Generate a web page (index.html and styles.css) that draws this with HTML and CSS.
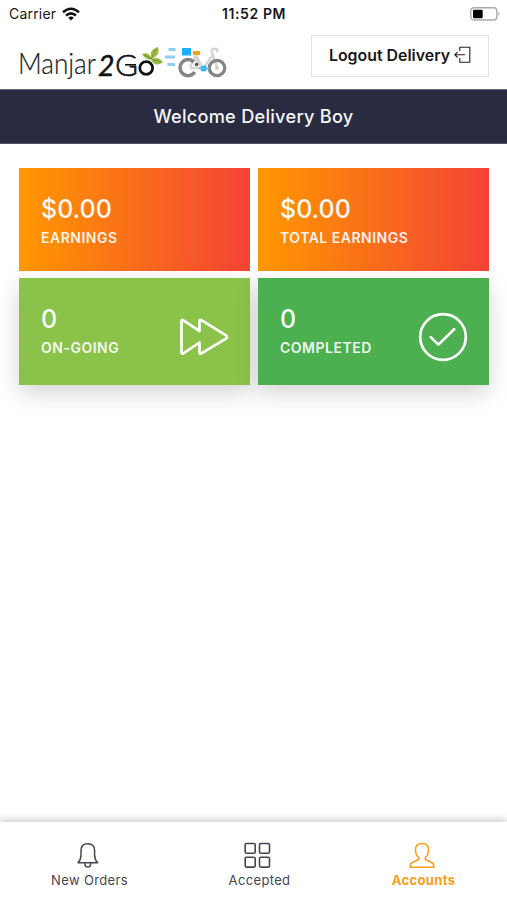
FILE: index.html
```html
<!DOCTYPE html>
<html lang="en">
<head>
<meta charset="utf-8">
<title>Manjar2Go Delivery</title>
<link rel="stylesheet" href="styles.css">
</head>
<body>
<div class="status">
  <div class="carrier"><span>Carrier</span>
    <svg width="18" height="14" viewBox="0 0 18 14" fill="none" stroke="#111" stroke-width="2.5"><path d="M1 5.2Q9-1.8 17 5.2M4 8.5Q9 4.2 14 8.5"/><path d="M6.2 10.7Q9 8.3 11.8 10.7L9 13.6Z" fill="#111" stroke="none"/></svg>
  </div>
  <div class="time">11:52 PM</div>
  <svg class="battery" width="31" height="14" viewBox="0 0 31 14"><rect x=".8" y=".8" width="26" height="12.2" rx="3.2" fill="none" stroke="#aaa" stroke-width="1.4"/><rect x="3" y="2.7" width="9.7" height="8.6" rx="1.2"/><path d="M28.4 4.8q2.2 2.2 0 4.4Z" fill="#aaa"/></svg>
</div>
<header class="header">
  <svg class="logo" width="210" height="36" viewBox="0 0 210 36">
    <text class="logo-text logo-thin" x="-1" y="30" textLength="78" lengthAdjust="spacingAndGlyphs">Manjar</text>
    <text class="logo-text logo-two" x="79" y="31.5" textLength="16.5" lengthAdjust="spacingAndGlyphs">2</text>
    <text class="logo-text logo-go" x="96" y="31.5" textLength="23" lengthAdjust="spacingAndGlyphs">G</text>
    <path d="M106 20.8H117" stroke="#111" stroke-width="1.6"/>
    <circle cx="127.2" cy="24" r="6.4" fill="none" stroke="#111" stroke-width="2.8"/>
    <g fill="#9abb43"><path d="M133 15Q129 6 139 3Q142 10 133 15ZM132 16Q138 11 144 18Q137 24 132 16ZM133 15Q127 17 123 10Q130 7 133 15Z"/><path d="M129 17Q134 14 137 5M132 15L142 18M125 11L133 15" fill="none" stroke="#668a2a" stroke-width=".7"/></g>
    <path d="M149.5 5.5h7M146 13h10M148.5 20.5h7.5" stroke="#8dcff8" stroke-width="3"/>
    <g fill="none" stroke="#d5d5d5" stroke-width="2.4"><path d="M171 23L177 11M177 11L184 25L193 12M171 24h12M192 6L198 23M192 5h6q1 2-1 3M176 12l4 10"/></g>
    <path d="M174.8 18A8 8 0 1 0 175.8 28" fill="none" stroke="#858585" stroke-width="3.5"/><circle cx="198" cy="24" r="7.7" fill="none" stroke="#858585" stroke-width="3.3"/>
    <circle cx="198" cy="24" r="2" fill="#ccc"/><circle cx="177.5" cy="20.5" r="1.8" fill="#555"/>
    <path d="M163 4h9v7.5H163Z" fill="#1caefa"/><path d="M174 7h7.2v4H174Z" fill="#f9a21b"/><circle cx="184.7" cy="24.5" r="3" fill="#20b4f4"/><path d="M180 24l10 1" stroke="#62bde9" stroke-width="1.5"/>
  </svg>
  <div class="logout"><span>Logout Delivery</span>
    <svg width="17" height="18" viewBox="0 0 17 18" fill="none" stroke="#222" stroke-width="1.1"><path d="M5.8 5V1.2H15.8V16.2H5.8V12M11 8.7H.8M3.6 5.9L.8 8.7L3.6 11.5"/></svg>
  </div>
</header>
<div class="banner"><span>Welcome Delivery Boy</span></div>
<main class="cards">
  <section class="card earnings"><div><div class="value">$0.00</div><div class="label">EARNINGS</div></div></section>
  <section class="card earnings"><div><div class="value">$0.00</div><div class="label">TOTAL EARNINGS</div></div></section>
  <section class="card count ongoing"><div><div class="value">0</div><div class="label">ON-GOING</div></div>
    <svg width="50" height="50" viewBox="0 0 50 50" fill="none" stroke="#fff" stroke-width="2.7" stroke-linejoin="round"><path d="M2.5 9.2Q2.5 7.2 4.4 8.4L20.5 19V9.2Q20.5 7.2 22.4 8.2L47 23.3Q49 25 47 26.6L22.4 41.4Q20.5 42.4 20.5 40.4V30.5L4.4 41.3Q2.5 42.4 2.5 40.4Z"/></svg></section>
  <section class="card count completed"><div><div class="value">0</div><div class="label">COMPLETED</div></div>
    <svg width="50" height="50" viewBox="0 0 50 50" fill="none" stroke="#fff" stroke-width="2.7" stroke-linecap="round" stroke-linejoin="round"><circle cx="25" cy="25" r="22.8"/><path d="M12.7 25.1L20.4 32.6L36.2 17.3"/></svg></section>
</main>
<nav class="nav">
  <div class="tab orders"><svg width="24" height="27" viewBox="0 0 24 27" fill="none" stroke="currentColor" stroke-width="1.5" stroke-linejoin="round"><path d="M2 20.7Q5 17.7 5 13V8.5Q5 1.7 11.8 1.7T18.6 8.5V13Q18.6 17.7 21.6 20.7ZM8.8 21.2Q9 25 11.8 25T14.8 21.2"/></svg><span>New Orders</span></div>
  <div class="tab accepted"><svg width="28" height="27" viewBox="0 0 28 27" fill="none" stroke="currentColor" stroke-width="1.6"><rect x="1.2" y="1.5" width="10" height="9.8" rx="1.3"/><rect x="15.5" y="1.5" width="10" height="9.8" rx="1.3"/><rect x="1.2" y="15.3" width="10" height="9.8" rx="1.3"/><rect x="15.5" y="15.3" width="10" height="9.8" rx="1.3"/></svg><span>Accepted</span></div>
  <div class="tab accounts"><svg width="26" height="27" viewBox="0 0 26 27" fill="none" stroke="currentColor" stroke-width="1.5" stroke-linejoin="round"><path d="M9.7 17.5V15.6Q6.5 12.8 6.5 7.8Q6.5 1.5 13 1.5T19.5 7.8Q19.5 12.8 16.3 15.6V17.5L22.2 20.2Q25 21.3 25 25.2H1Q1 21.3 3.8 20.2Z"/></svg><span>Accounts</span></div>
</nav>
</body>
</html>
```
FILE: styles.css
```css
* { box-sizing: border-box; }
body { margin: 0; height: 900px; display: flex; flex-direction: column; overflow: hidden; background: #fff; color: #17171b; font-family: Inter, "Liberation Sans", sans-serif; }
svg { display: block; flex: none; }
.status { height: 28px; padding: 0 6px 0 9px; display: grid; grid-template-columns: 1fr auto 1fr; align-items: center; font-size: 14px; line-height: 28px; }
.carrier { display: flex; align-items: center; gap: 6px; letter-spacing: .2px; }
.time { font-weight: 600; font-size: 14px; letter-spacing: .6px; margin-right: 2px; }
.battery { justify-self: end; margin-top: -1px; }
.header { height: 61px; padding: 7px 18px 0 19px; display: flex; justify-content: space-between; align-items: flex-start; }
.logo { margin-top: 9px; }
.logo-text { font-family: Lato, sans-serif; }
.logo-thin { font-size: 29px; font-weight: 300; fill: #222; stroke: #222; stroke-width: .2px; }
.logo-two { font-size: 28px; font-weight: 400; font-style: italic; fill: #111; stroke: #111; stroke-width: .5px; }
.logo-go { font-size: 29px; font-weight: 300; fill: #111; stroke: #111; stroke-width: .6px; }
.logout { width: 178px; height: 42px; padding-bottom: 2px; border: 1px solid #e2e2e2; display: flex; align-items: center; justify-content: center; gap: 4px; font-size: 15.9px; font-weight: 600; white-space: nowrap; }
.banner { height: 55px; padding-bottom: 1px; background: #292b40; border-top: 1px solid #66677a; border-bottom: 1px solid #55566a; color: #f6f6fa; display: flex; align-items: center; justify-content: center; font-size: 18.2px; font-weight: 500; letter-spacing: .25px; }
.cards { padding: 24px 18px 0 19px; display: grid; grid-template-columns: 231px 231px; grid-template-rows: 103px 107px; column-gap: 8px; row-gap: 7px; }
.card { padding: 3px 21px 0 22px; display: flex; align-items: center; justify-content: space-between; color: #fff; }
.earnings { background: linear-gradient(90deg, #ff9800, #f44336); }
.count { box-shadow: 0 8px 22px rgba(0, 0, 0, .17); padding-bottom: 4px; }
.count svg { margin-top: 11px; }
.ongoing { background: #8bc34a; }
.completed { background: #4caf50; }
.value { font-size: 25px; line-height: 32px; font-weight: 500; opacity: .95; }
.label { margin-top: 2px; font-size: 14px; line-height: 22px; font-weight: 600; letter-spacing: .5px; opacity: .9; }
.nav { margin-top: auto; height: 78px; padding-top: 20px; display: grid; grid-template-columns: 179px 161px 167px; box-shadow: 0 -2px 8px rgba(0, 0, 0, .22); font-size: 13px; color: #45454f; }
.tab { display: flex; flex-direction: column; align-items: center; gap: 3px; line-height: 17px; letter-spacing: .35px; }
.tab svg { margin-right: 3px; }
.accounts { color: #f99e1b; font-weight: 700; }
```
